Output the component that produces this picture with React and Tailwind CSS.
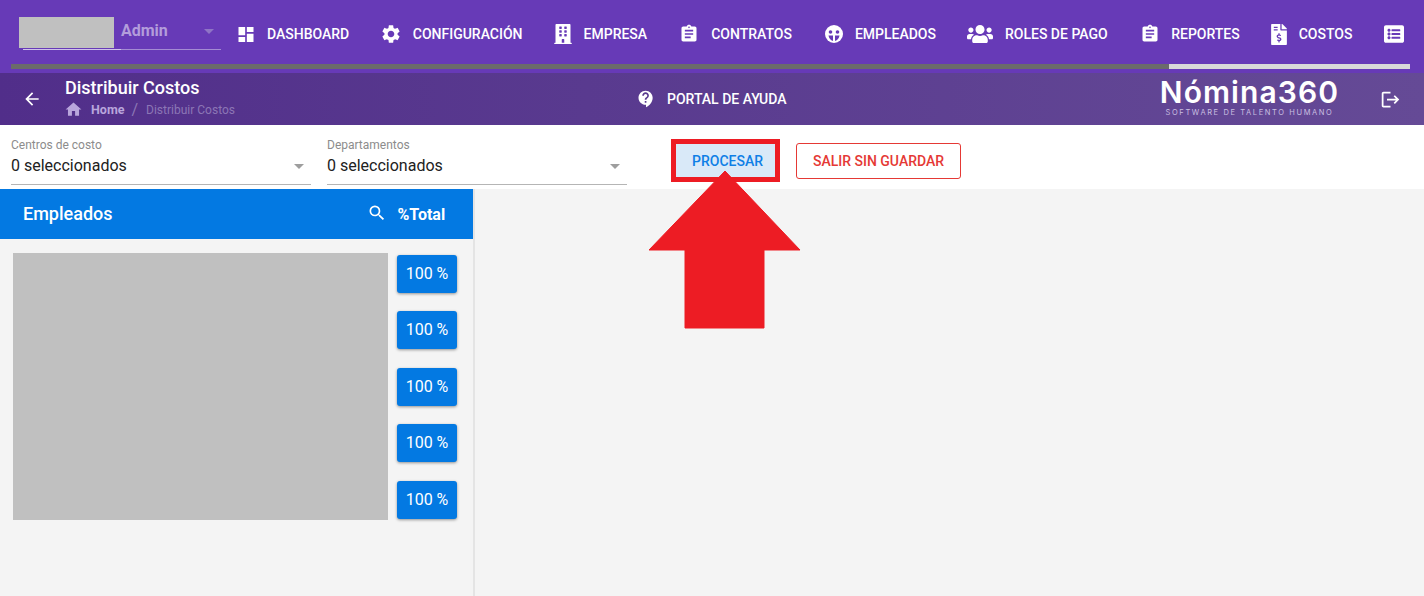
import React from 'react'
import { MdDashboard, MdSettings, MdAssignment, MdContactSupport, MdLogout, MdSearch, MdHome, MdArrowBack } from 'react-icons/md'
import { FaUsers, FaFileInvoiceDollar, FaBuilding, FaListAlt } from 'react-icons/fa'

const FaceIcon = () => (
  <svg width="18" height="18" viewBox="0 0 18 18">
    <circle cx="9" cy="9" r="9" fill="#fff" />
    <circle cx="5.5" cy="7" r="1.8" fill="#673ab7" />
    <circle cx="12.5" cy="7" r="1.8" fill="#673ab7" />
    <path d="M3.5 10.5 H8 V16 C5.5 15.3 4 13.2 3.5 10.5 Z" fill="#673ab7" />
    <path d="M10 10.5 H14.5 C14 13.2 12.5 15.3 10 16 Z" fill="#673ab7" />
  </svg>
)

const menu = [
  { label: 'DASHBOARD', icon: <MdDashboard size={21} />, box: 'ml-[15px] w-[20px] mr-[11px]' },
  { label: 'CONFIGURACIÓN', icon: <MdSettings size={22} />, box: 'ml-[31px] w-[22px] mr-[10.5px]' },
  { label: 'EMPRESA', icon: <FaBuilding size={20} />, box: 'ml-[31.5px] w-[18px] mr-[11.5px]' },
  { label: 'CONTRATOS', icon: <MdAssignment size={22} />, box: 'ml-[32px] w-[20px] mr-[12px]' },
  { label: 'EMPLEADOS', icon: <FaceIcon />, box: 'ml-[32px] w-[20px] mr-[11px]' },
  { label: 'ROLES DE PAGO', icon: <FaUsers size={26} />, box: 'ml-[31.5px] w-[26px] mr-[11.5px]' },
  { label: 'REPORTES', icon: <MdAssignment size={22} />, box: 'ml-[32px] w-[20px] mr-[11.5px]' },
  { label: 'COSTOS', icon: <FaFileInvoiceDollar size={21} />, box: 'ml-[31px] w-[16px] mr-[12px]' },
  { label: '', icon: <FaListAlt size={20} />, box: 'ml-[31px] w-[22px]' },
]

const Select = ({ label }) => (
  <div className="w-[300px] h-[60px] border-b border-[#b5b5b5] flex flex-col relative">
    <span className="text-[12px] leading-[14px] mt-[13px] text-[#8c8c8c]">{label}</span>
    <span className="text-[16px] leading-[19px] mt-[4px] text-[#212121]">0 seleccionados</span>
    <span className="absolute right-[7px] top-[39px] border-x-[5px] border-x-transparent border-t-[5px] border-t-[#9e9e9e]" />
  </div>
)

const App = () => {
  return (
    <div className="w-[1424px] h-[596px] overflow-hidden flex flex-col relative bg-[#f4f4f4] font-['Roboto',sans-serif]">
      {/* Menu */}
      <div className="h-[73px] bg-[#673ab7] shrink-0">
        <div className="h-[64px] flex items-start text-white">
          <div className="w-[202px] ml-[19px] mt-[17px] h-[33px] relative shrink-0">
            <div className="flex items-center">
              <div className="w-[95px] h-[31px] bg-[#c0c0c0]" />
              <span className="ml-[7px] text-[16px] font-bold text-[#b39ddb] leading-[27px] -mt-[4px]">Admin</span>
            </div>
            <span className="absolute right-[7px] top-[12px] border-x-[5px] border-x-transparent border-t-[5px] border-t-[#8f74c6]" />
            <div className="absolute left-[4px] bottom-0 w-[198px] h-px bg-[#a48bd3]" />
            <div className="absolute left-[4px] bottom-0 w-[98px] h-px bg-[#cfc2ea]" />
          </div>
          <div className="flex items-center mt-[22px] h-[24px]">
            {menu.map((m, i) => (
              <div key={i} className="flex items-center">
                <span className={`${m.box} h-[24px] flex items-center justify-center shrink-0`}>{m.icon}</span>
                {m.label && <span className="text-[14px] font-medium whitespace-nowrap">{m.label}</span>}
              </div>
            ))}
          </div>
        </div>
        <div className="ml-[11px] w-[1399px] h-[5px] bg-[#6b6b6b] flex justify-end">
          <div className="w-[241px] bg-[#d9d9d9]" />
        </div>
      </div>

      {/* Subheader */}
      <div className="h-[52px] shrink-0 bg-gradient-to-r from-[#512e8a] to-[#654a96] flex items-center text-white">
        <MdArrowBack size={20} className="ml-[22px]" />
        <div className="ml-[23px] w-[571px] -mt-[1px]">
          <div className="text-[18px] leading-[21px] font-medium -mt-[1px]">Distribuir Costos</div>
          <div className="flex items-center text-[12px] leading-[14px] mt-[2px]">
            <MdHome size={19} className="text-[#b9a6dc] -ml-[1px]" />
            <span className="ml-[8px] text-[12.5px] font-bold text-[#b9a6dc]">Home</span>
            <span className="ml-[7px] text-[16px] leading-[14px] text-[#8c76b5]">/</span>
            <span className="ml-[8px] text-[#8c76b5]">Distribuir Costos</span>
          </div>
        </div>
        <MdContactSupport size={20} />
        <span className="ml-[11px] text-[14px] font-medium whitespace-nowrap">PORTAL DE AYUDA</span>
        <div className="ml-[374px] w-[178px] flex flex-col items-center -mt-[5px]">
          <span className="font-['Inter',sans-serif] text-[30px] leading-[30px] font-semibold tracking-[1.1px] whitespace-nowrap">Nómina360</span>
          <span className="font-['Inter',sans-serif] text-[7.5px] leading-[9px] mt-[1px] tracking-[1.6px] text-[#c9bfe0] whitespace-nowrap">SOFTWARE DE TALENTO HUMANO</span>
        </div>
        <MdLogout size={21} className="ml-[41px]" />
      </div>

      {/* Filtros */}
      <div className="h-[64px] shrink-0 bg-white flex items-start pl-[11px]">
        <Select label="Centros de costo" />
        <div className="ml-[16px]"><Select label="Departamentos" /></div>
        <div className="ml-[44px] mt-[14px] border-[5px] border-[#ed1c24]">
          <button className="w-[99px] h-[33px] pl-[4px] pt-[2px] bg-[#d9e9f8] text-[#0f7fe6] text-[14px] font-medium">PROCESAR</button>
        </div>
        <button className="ml-[16px] mt-[18px] w-[165px] h-[36px] pt-[1px] border border-[#e53935] rounded-[3px] text-[#e53935] text-[14px] font-medium">SALIR SIN GUARDAR</button>
      </div>

      {/* Contenido */}
      <div className="flex-1 flex min-h-0">
        <div className="w-[475px] border-r-2 border-[#e4e4e4] shrink-0">
          <div className="h-[50px] bg-[#0379e2] text-white flex items-center">
            <span className="ml-[23px] text-[18px] font-medium -mt-[2px]">Empleados</span>
            <MdSearch size={20} className="ml-[254px] -mt-[2px]" />
            <span className="ml-[11px] text-[16px] font-bold mt-[1px]">%Total</span>
          </div>
          <div className="flex items-start pl-[13px] pt-[14px]">
            <div className="w-[375px] h-[267px] bg-[#c0c0c0]" />
            <div className="ml-[9px] mt-[1.9px] flex flex-col gap-[18.5px]">
              {[0, 1, 2, 3, 4].map((n) => (
                <div key={n} className="w-[60px] h-[38px] rounded-[3px] bg-[#0379e2] text-white text-[16px] flex items-center justify-center shadow-[0_1px_3px_rgba(0,0,0,0.4)]">
                  100 %
                </div>
              ))}
            </div>
          </div>
        </div>
      </div>

      {/* Flecha */}
      <svg className="absolute left-[649px] top-[171px]" width="152" height="158" viewBox="0 0 152 158">
        <path d="M76 0 L151 79 L115 79 L115 157 L36 157 L36 79 L0 79 Z" fill="#ed1c24" stroke="#ed1c24" strokeWidth="1" strokeLinejoin="round" />
      </svg>
    </div>
  )
}

export default App
